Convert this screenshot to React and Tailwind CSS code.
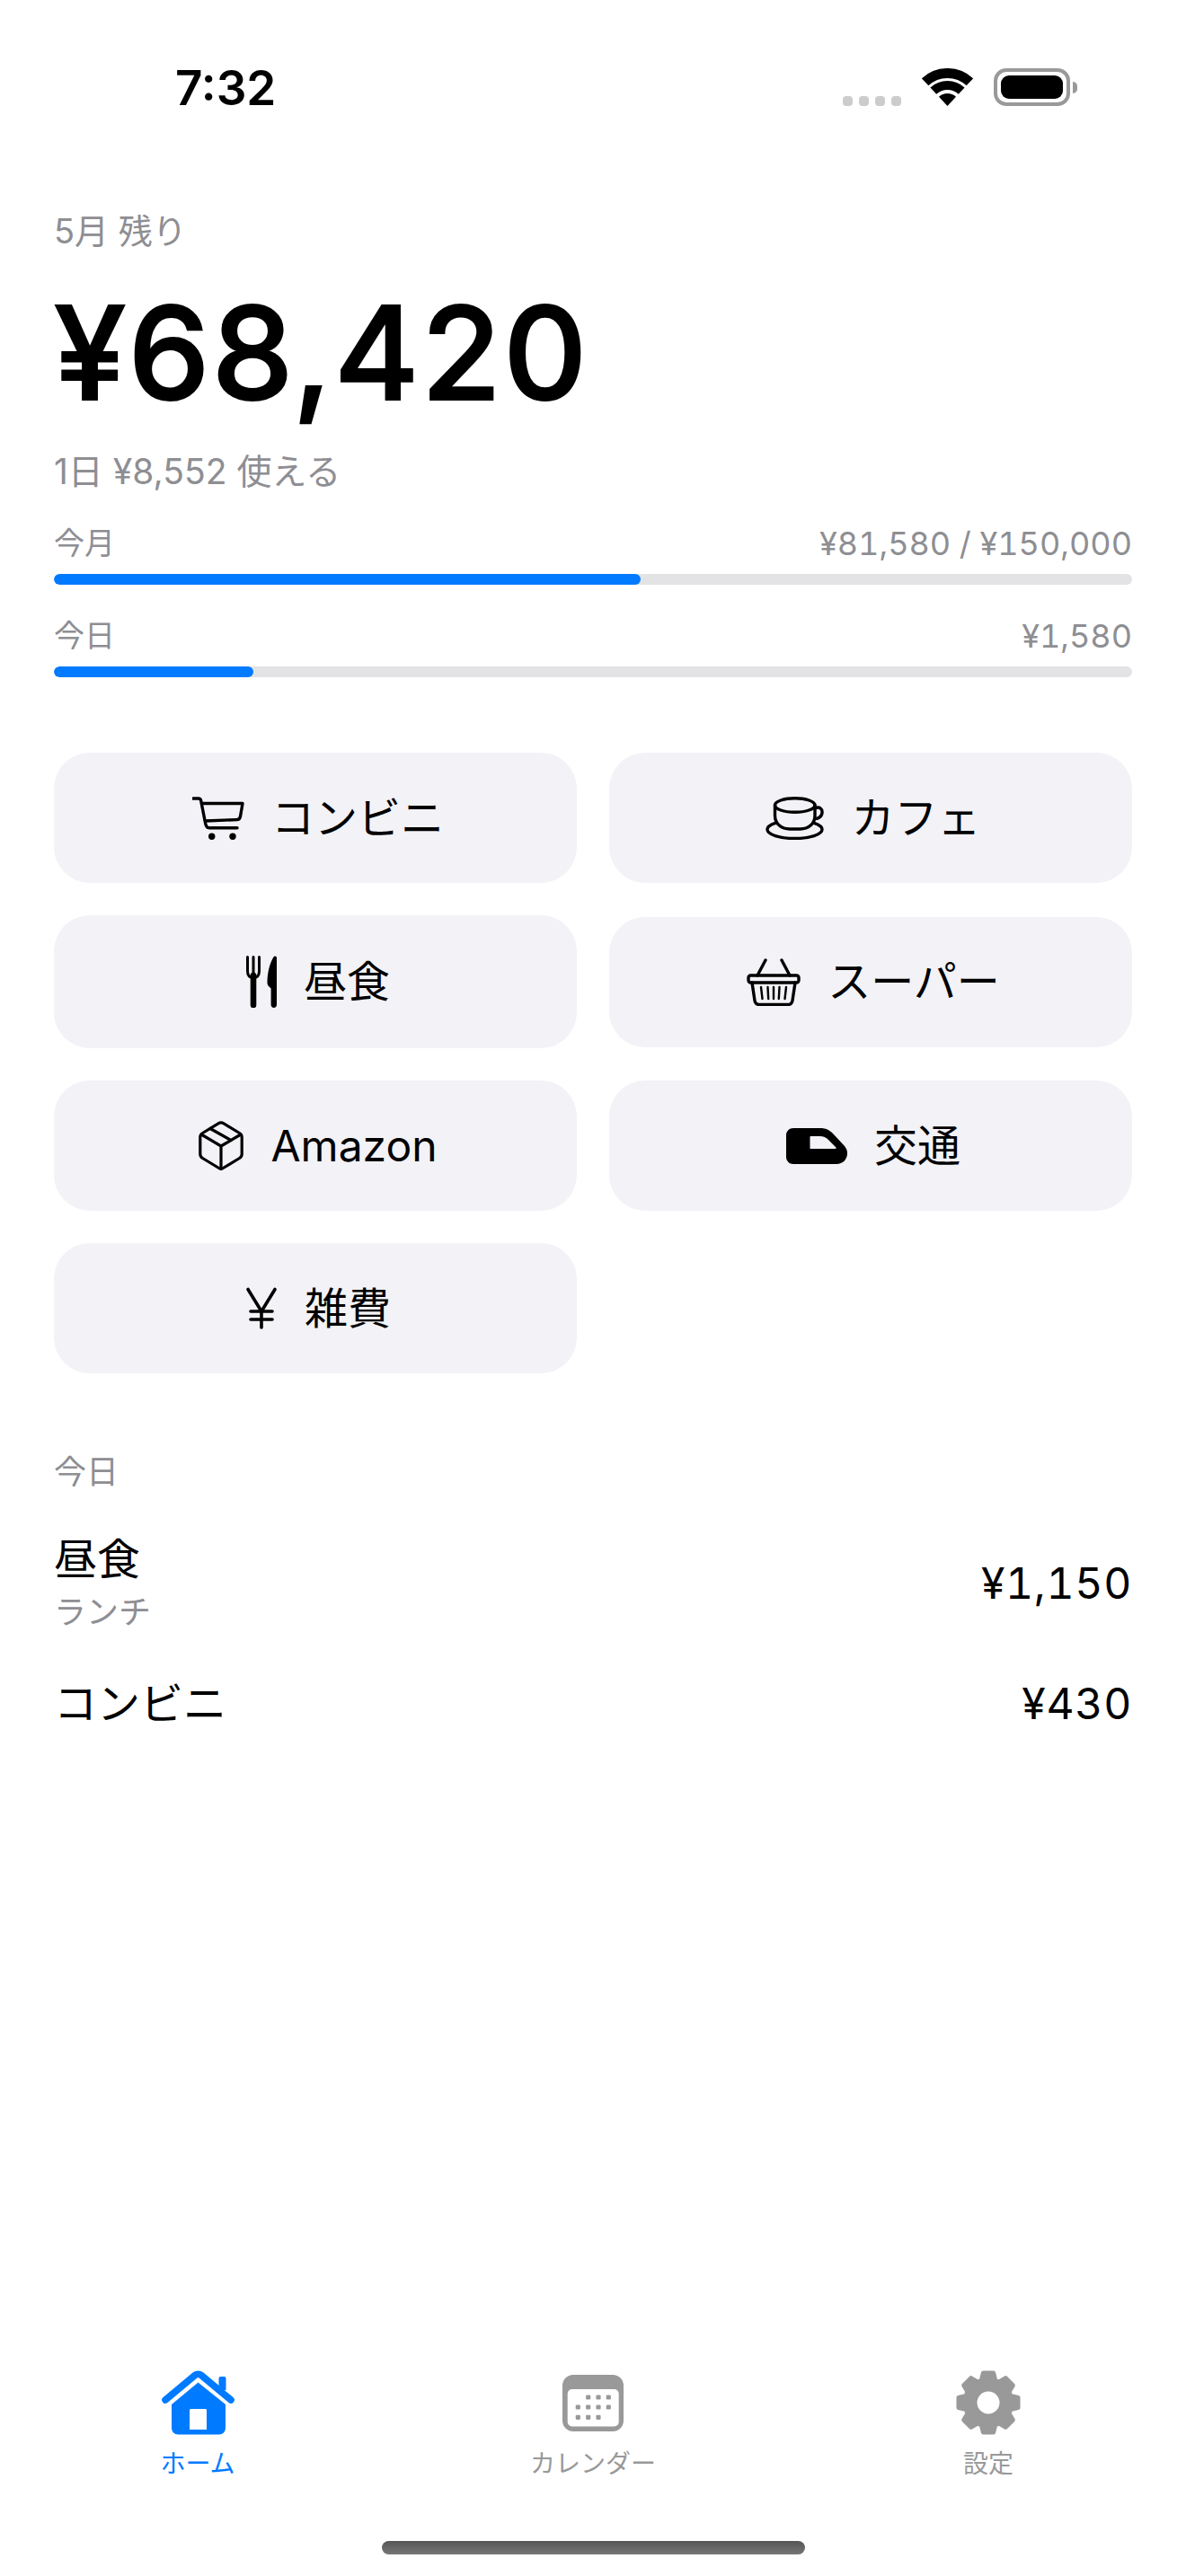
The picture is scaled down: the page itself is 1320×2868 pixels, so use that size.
import React from "react";

const gearPath = () => {
  // 8 teeth, first one pointing straight up
  const pts = [];
  for (let i = 0; i < 8; i++) {
    const a = (i * Math.PI) / 4 - Math.PI / 2;
    const at = (r, da) => [36 + r * Math.cos(a + da), 36 + r * Math.sin(a + da)];
    pts.push(at(26, -0.3), at(33.5, -0.17), at(33.5, 0.17), at(26, 0.3));
  }
  return "M" + pts.map((p) => p[0].toFixed(2) + " " + p[1].toFixed(2)).join("L") + "Z";
};

const CartIcon = () => (
  <svg width="58" height="48" viewBox="0 0 58 48" fill="none" stroke="black" strokeWidth="3.4" strokeLinecap="round" strokeLinejoin="round">
    <path d="M1 2H7C8.5 2 9.3 2.8 9.6 4.2L14.5 29C15 32.5 16.5 34.7 19 34.7H50" />
    <path d="M11 7.5H56L53.5 22C53.2 24.3 52 25.5 49.5 25.6L14.5 27" />
    <circle cx="21.7" cy="44.3" r="3.7" fill="black" stroke="none" />
    <circle cx="45" cy="44.3" r="3.7" fill="black" stroke="none" />
  </svg>
);

const ForkIcon = () => (
  <svg width="34" height="58" viewBox="0 0 34 58" fill="none">
    <path d="M1.5 1.5V17C1.5 22 4 24.5 8 24.5C12 24.5 14.5 22 14.5 17V1.5M8 1.5V20" stroke="black" strokeWidth="3" strokeLinecap="round" />
    <path d="M8 22V55" stroke="black" strokeWidth="6.6" strokeLinecap="round" />
    <path d="M32 0.5C33.2 0.5 34 1.3 34 2.5V54.5C34 56.5 32.5 58 30.8 58C29 58 27.6 56.5 27.6 54.5V36.5L25.5 34.5C24 33 23.5 31.5 23.5 30C23.5 18 26.5 8 30.5 1.5C31 0.8 31.5 0.5 32 0.5Z" fill="black" />
  </svg>
);

const CupIcon = () => (
  <svg width="65" height="48" viewBox="0 0 65 48" fill="none" stroke="black" strokeWidth="3.4" strokeLinecap="round" strokeLinejoin="round">
    <ellipse cx="32.5" cy="36.5" rx="30.5" ry="10" />
    <path d="M55 13C60 10.5 63.5 13.5 63 18C62.5 23 57 25.5 53 24" />
    <path d="M10.5 9V21C10.5 31 18 37 27 37H38C47 37 55 31 55 21V9Z" fill="#f2f2f7" stroke="none" />
    <path d="M10.5 9V21C10.5 30.5 18 36 27 36H38.5C47.5 36 55 30.5 55 21V9" />
    <ellipse cx="32.7" cy="9.5" rx="22.2" ry="7.8" />
  </svg>
);

const BasketIcon = () => (
  <svg width="60" height="53" viewBox="0 0 60 53" fill="none" stroke="black" strokeWidth="3.4" strokeLinecap="round" strokeLinejoin="round">
    <path d="M21 2L12 19M39 2L48 19" />
    <rect x="2" y="19" width="56" height="8" rx="2.5" />
    <path d="M6 27L9 47C9.5 50 11 51.5 14 51.5H46C49 51.5 50.5 50 51 47L54 27" />
    <path d="M16 32L17.5 45M23.5 32L24.2 45M30 32V45M36.5 32L35.8 45M44 32L42.5 45" strokeWidth="2.4" />
  </svg>
);

const BoxIcon = () => (
  <svg width="50" height="55" viewBox="0 0 50 55" fill="none" stroke="black" strokeWidth="3.2" strokeLinecap="round" strokeLinejoin="round">
    <path d="M22 2.8C24 1.6 26 1.6 28 2.8L45.5 13.5C47.3 14.6 48.2 16 48.2 18V37C48.2 39 47.3 40.4 45.5 41.5L26.5 53C25.5 53.6 24.5 53.6 23.5 53L4.5 41.5C2.7 40.4 1.8 39 1.8 37V18C1.8 16 2.7 14.6 4.5 13.5Z" />
    <path d="M3 15L25 28L47 15M25 28V53" />
    <path d="M13 8.5L36 21.5" />
  </svg>
);

const TrainIcon = () => (
  <svg width="68" height="40" viewBox="0 0 68 40">
    <path
      fillRule="evenodd"
      d="M8 0H38C44 0 48 2 52 6L65 20C67 22.5 68 25 68 28C68 35 63 40 56 40H8C3.5 40 0 36.5 0 32V8C0 3.5 3.5 0 8 0ZM27.5 9C26.8 9 26.5 9.4 26.5 10V22C26.5 22.6 26.8 23 27.5 23H54.5C55.6 23 56 22 55.2 21.2L47 13C44.5 10.4 41.5 9 37.5 9Z"
      fill="black"
    />
  </svg>
);

const YenIcon = () => (
  <svg width="36" height="47" viewBox="0 0 36 47" fill="none" stroke="black" strokeWidth="3.6" strokeLinecap="round" strokeLinejoin="round">
    <path d="M3 2.5L18 27L33 2.5M18 27V45M6 27H30M6 36H30" />
  </svg>
);

const HomeIcon = () => (
  <svg width="81" height="72" viewBox="0 0 81 72">
    <path d="M63.5 9C63.5 7.9 64.4 7 65.5 7H69.5C70.6 7 71.5 7.9 71.5 9V22H63.5Z" fill="#007aff" />
    <path d="M4 33L37 5.5C39 3.8 42 3.8 44 5.5L77 33" fill="none" stroke="#007aff" strokeWidth="7.6" strokeLinecap="round" strokeLinejoin="round" />
    <path
      fillRule="evenodd"
      d="M40.5 13.5L71 38V64C71 68.4 68 71.5 63.5 71.5H18.5C14 71.5 11 68.4 11 64V38ZM32.5 43C31.7 43 31 43.7 31 44.5V66H50V44.5C50 43.7 49.3 43 48.5 43Z"
      fill="#007aff"
    />
  </svg>
);

const CalendarIcon = () => {
  const dots = [
    [28.7, 25], [40, 25], [51.3, 25],
    [17.3, 36], [28.7, 36], [40, 36], [51.3, 36],
    [17.3, 47.3], [28.7, 47.3], [40, 47.3],
  ];
  return (
    <svg width="68" height="63" viewBox="0 0 68 63">
      <rect width="68" height="63" rx="12" fill="#999999" />
      <rect x="5.7" y="16" width="57" height="41.5" rx="5" fill="white" />
      {dots.map(([x, y]) => (
        <rect key={x + "-" + y} x={x - 2.6} y={y - 2.6} width="5.2" height="5.2" rx="1.4" fill="#999999" />
      ))}
    </svg>
  );
};

const GearIcon = () => (
  <svg width="72" height="72" viewBox="0 0 72 72">
    <path d={gearPath()} fill="#999999" stroke="#999999" strokeWidth="5" strokeLinejoin="round" />
    <circle cx="36" cy="36" r="12.5" fill="white" />
  </svg>
);

const WifiIcon = () => (
  <svg width="57" height="42" viewBox="0 0 57 42" fill="none">
    <path d="M3.6 15.3A36.5 36.5 0 0 1 53.4 15.3" stroke="black" strokeWidth="11" />
    <path d="M12.8 25.2A23 23 0 0 1 44.2 25.2" stroke="black" strokeWidth="10" />
    <path d="M28.5 42L19 31.8A14 14 0 0 1 38 31.8Z" fill="black" />
  </svg>
);

const categories = [
  { label: "コンビニ", icon: <CartIcon /> },
  { label: "カフェ", icon: <CupIcon /> },
  { label: "昼食", icon: <ForkIcon />, tall: true },
  { label: "スーパー", icon: <BasketIcon /> },
  { label: "Amazon", icon: <BoxIcon /> },
  { label: "交通", icon: <TrainIcon /> },
  { label: "雑費", icon: <YenIcon /> },
];

const ProgressRow = ({ label, value, fill, className }) => (
  <div className={className}>
    <div className="flex items-center justify-between leading-[40px] text-[#8e8e93]">
      <span className="text-[34px]">{label}</span>
      <span className="text-[36px] tabular-nums">{value}</span>
    </div>
    <div className="mt-[14px] h-[12px] overflow-hidden rounded-full bg-[#e3e3e5]">
      <div className="h-full rounded-full bg-[#007aff]" style={{ width: fill }} />
    </div>
  </div>
);

const TabItem = ({ icon, label, active }) => (
  <div className="flex flex-col items-center">
    <div className="flex h-[72px] items-center justify-center">{icon}</div>
    <span className={`mt-[16px] text-[28px] leading-[32px] ${active ? "text-[#007aff]" : "text-[#999999]"}`}>{label}</span>
  </div>
);

export default function App() {
  return (
    <div className="flex h-[2868px] w-[1320px] flex-col overflow-hidden bg-white font-['Inter','Noto_Sans_CJK_JP',sans-serif] text-black">
      {/* status bar */}
      <div className="flex items-center justify-between pl-[195px] pr-[121px] pt-[75px]">
        <span className="pt-[2px] text-[53px] font-semibold leading-[42px]">7:32</span>
        <div className="flex h-[42px] items-end">
          <div className="flex gap-[7px]">
            <div className="h-[11px] w-[11px] rounded-[4px] bg-[#cccccc]" />
            <div className="h-[11px] w-[11px] rounded-[4px] bg-[#cccccc]" />
            <div className="h-[11px] w-[11px] rounded-[4px] bg-[#cccccc]" />
            <div className="h-[11px] w-[11px] rounded-[4px] bg-[#cccccc]" />
          </div>
          <div className="ml-[23px]">
            <WifiIcon />
          </div>
          <div className="ml-[23px] flex items-center self-stretch">
            <div className="h-[42px] w-[85px] rounded-[14px] border-[4px] border-[#999999] p-[4px]">
              <div className="h-full w-full rounded-[9px] bg-black" />
            </div>
            <div className="ml-[3px] h-[13px] w-[5px] rounded-r-full bg-[#999999]" />
          </div>
        </div>
      </div>

      <main className="px-[60px]">
        <div className="mt-[116px] text-[38px] leading-[44px] text-[#8e8e93]">5月 残り</div>
        <div className="mt-[34px] text-[144px] font-medium leading-[160px] tracking-[2.5px] [-webkit-text-stroke:2px_black]">¥68,420</div>
        <div className="mt-[30px] text-[39px] leading-[44px] text-[#8e8e93]">1日 ¥8,552 使える</div>

        <ProgressRow className="mt-[38px]" label="今月" value="¥81,580 / ¥150,000" fill="54.4%" />
        <ProgressRow className="mt-[37px]" label="今日" value="¥1,580" fill="18.5%" />

        <div className="mt-[84px] grid grid-cols-2 items-center gap-x-[36px] gap-y-[36px]">
          {categories.map((c) => (
            <button
              key={c.label}
              className={`flex items-center justify-center gap-[30px] rounded-[40px] bg-[#f2f2f7] pl-[6px] text-[48px] leading-[56px] ${
                c.tall ? "h-[148px]" : "h-[145px]"
              }`}
            >
              {c.icon}
              <span>{c.label}</span>
            </button>
          ))}
        </div>

        <div className="mt-[88px] text-[36px] leading-[44px] text-[#8e8e93]">今日</div>

        <div className="mt-[47px] flex items-center justify-between">
          <div>
            <div className="text-[48px] leading-[56px]">昼食</div>
            <div className="mt-[9px] text-[36px] leading-[44px] text-[#8e8e93]">ランチ</div>
          </div>
          <span className="text-[48px] leading-[56px] tabular-nums tracking-[0.015em]">¥1,150</span>
        </div>
        <div className="mt-[52px] flex items-center justify-between">
          <span className="text-[48px] leading-[56px]">コンビニ</span>
          <span className="text-[48px] leading-[56px] tabular-nums tracking-[0.015em]">¥430</span>
        </div>
      </main>

      <nav className="mt-auto grid grid-cols-3">
        <TabItem icon={<HomeIcon />} label="ホーム" active />
        <TabItem icon={<CalendarIcon />} label="カレンダー" />
        <TabItem icon={<GearIcon />} label="設定" />
      </nav>
      <div className="mb-[24px] mt-[70px] flex justify-center">
        <div className="h-[15px] w-[471px] rounded-full bg-gradient-to-b from-[#555555] to-[#777777]" />
      </div>
    </div>
  );
}
